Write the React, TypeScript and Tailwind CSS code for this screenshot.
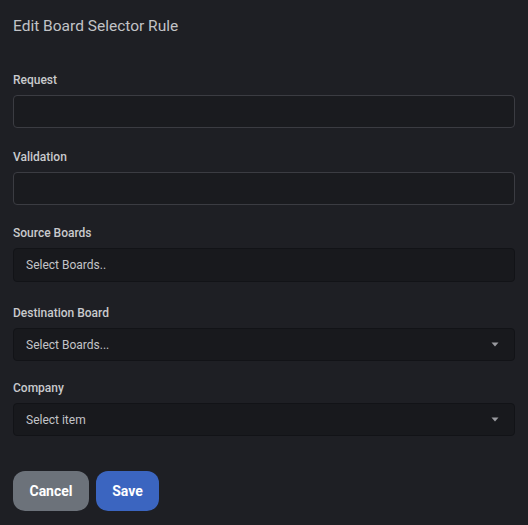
import { ReactNode } from 'react';

function Label({ children }: { children: ReactNode }) {
  return (
    <label className="block text-[12px] leading-4 font-medium text-[#c9cacd] mb-[7px]">
      {children}
    </label>
  );
}

function Caret() {
  return (
    <svg width="8" height="5" viewBox="0 0 8 5" className="shrink-0">
      <path d="M0.5 0.5 L7.5 0.5 L4 4.5 Z" fill="#9a9ba0" />
    </svg>
  );
}

function SelectBox({ placeholder, caret }: { placeholder: string; caret?: boolean }) {
  return (
    <div className="flex items-center justify-between h-[33px] rounded-[4px] border border-[#121317] bg-[#18191d] pl-[12px] pr-[15px]">
      <span className="text-[12px] text-[#c3c4c8]">{placeholder}</span>
      {caret && <Caret />}
    </div>
  );
}

export default function App() {
  return (
    <div
      className="min-h-screen bg-[#1e1f24] px-[13px] pt-[14px]"
      style={{ fontFamily: 'Roboto, "Liberation Sans", sans-serif' }}
    >
      <h1 className="text-[15.5px] leading-6 text-[#c2c3c7] font-normal">Edit Board Selector Rule</h1>

      <div className="mt-[34px] w-[502px]">
        <Label>Request</Label>
        <input
          className="block w-full h-[33px] rounded-[4px] border border-[#3b3c42] bg-[#1a1b1f] outline-none px-3 text-[12px] text-[#c3c4c8]"
          type="text"
        />

        <div className="mt-[21px]">
          <Label>Validation</Label>
          <input
            className="block w-full h-[33px] rounded-[4px] border border-[#3b3c42] bg-[#1a1b1f] outline-none px-3 text-[12px] text-[#c3c4c8]"
            type="text"
          />
        </div>

        <div className="mt-[20px]">
          <Label>Source Boards</Label>
          <div className="flex items-center h-[34px] rounded-[4px] border border-[#121317] bg-[#18191d] pl-[12px]">
            <span className="text-[12px] text-[#c3c4c8]">Select Boards..</span>
          </div>
        </div>

        <div className="mt-[23px]">
          <Label>Destination Board</Label>
          <SelectBox placeholder="Select Boards..." caret />
        </div>

        <div className="mt-[19px]">
          <Label>Company</Label>
          <SelectBox placeholder="Select item" caret />
        </div>
      </div>

      <div className="flex gap-[7px] mt-[35px]">
        <button className="h-[40px] w-[76px] rounded-[12px] bg-[#6c727a] text-white text-[14px] font-bold">
          Cancel
        </button>
        <button className="h-[40px] w-[63px] rounded-[12px] bg-[#3b65c0] text-white text-[14px] font-bold">
          Save
        </button>
      </div>
    </div>
  );
}
